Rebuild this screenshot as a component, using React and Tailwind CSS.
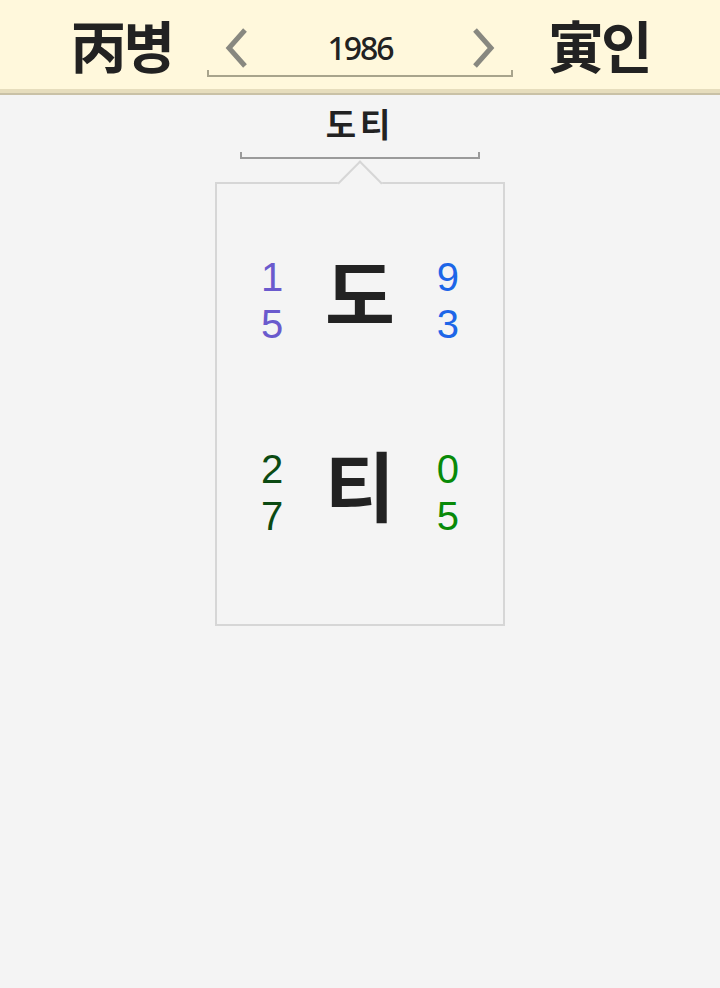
import React from 'react';

const kr = { fontFamily: '"Noto Sans CJK KR", "Noto Sans", sans-serif' };
const num = { fontFamily: '"Liberation Sans", Arial, sans-serif' };
const year = { fontFamily: '"Noto Sans", "Liberation Sans", sans-serif' };

function Chevron({ dir }) {
  const d = dir === 'left' ? 'M21 2 L5 20 L21 38' : 'M3 2 L19 20 L3 38';
  return (
    <svg width="24" height="40" viewBox="0 0 24 40" className="shrink-0">
      <path d={d} fill="none" stroke="#888880" strokeWidth="5" />
    </svg>
  );
}

function Cell({ top, bottom, color }) {
  return (
    <div className={`flex flex-col items-center w-[26px] text-[40px] leading-[47px] ${color}`} style={num}>
      <span>{top}</span>
      <span>{bottom}</span>
    </div>
  );
}

function Row({ char, left, right }) {
  return (
    <div className="flex items-center justify-center gap-[40px]">
      <Cell {...left} />
      <div className="text-[76px] font-bold leading-none text-[#222] -mt-[20px]" style={kr}>{char}</div>
      <Cell {...right} />
    </div>
  );
}

export default function App() {
  return (
    <div className="min-h-[988px] bg-[#f4f4f4]" style={kr}>
      <header className="bg-[#fff8dc]">
        <div className="h-[89px] flex items-center justify-center gap-[35px] text-[#222]">
          <div className="text-[56px] font-bold leading-none -mt-[2px] tracking-[-3px]">丙병</div>
          <div className="w-[306px] mt-[15px]">
            <div className="flex items-center justify-between px-[17px]">
              <Chevron dir="left" />
              <span className="text-[32px] font-medium leading-[40px] text-[#222] tracking-[-2px]" style={year}>1986</span>
              <Chevron dir="right" />
            </div>
            <div className="h-[7px] mt-[2px] border-x-2 border-b-2 border-[#a8a48c]" />
          </div>
          <div className="text-[56px] font-bold leading-none -mt-[2px] tracking-[-3px]">寅인</div>
        </div>
        <div className="h-[4px] bg-[#e6ddbd]" />
        <div className="h-[2px] bg-[#c9c1a6]" />
      </header>

      <div className="flex flex-col items-center">
        <div className="mt-[5px] text-[33px] font-bold leading-[46px] tracking-[4px] text-[#222]">도티</div>
        <div className="w-[240px] h-[7px] mt-[6px] border-x-2 border-b-2 border-[#9a9a9a]" />

        <div className="relative mt-[23px] w-[290px] h-[444px] border-2 border-[#d6d6d6]">
          <div className="absolute left-1/2 -top-[17px] w-[32px] h-[32px] -translate-x-1/2 rotate-45 bg-[#f4f4f4] border-t-2 border-l-2 border-[#d6d6d6]" />
          <div className="flex flex-col pt-[70px] gap-[98px]">
            <Row
              char="도"
              left={{ top: '1', bottom: '5', color: 'text-[#6a5acd]' }}
              right={{ top: '9', bottom: '3', color: 'text-[#1d66e8]' }}
            />
            <Row
              char="티"
              left={{ top: '2', bottom: '7', color: 'text-[#0b4a12]' }}
              right={{ top: '0', bottom: '5', color: 'text-[#088a08]' }}
            />
          </div>
        </div>
      </div>
    </div>
  );
}
